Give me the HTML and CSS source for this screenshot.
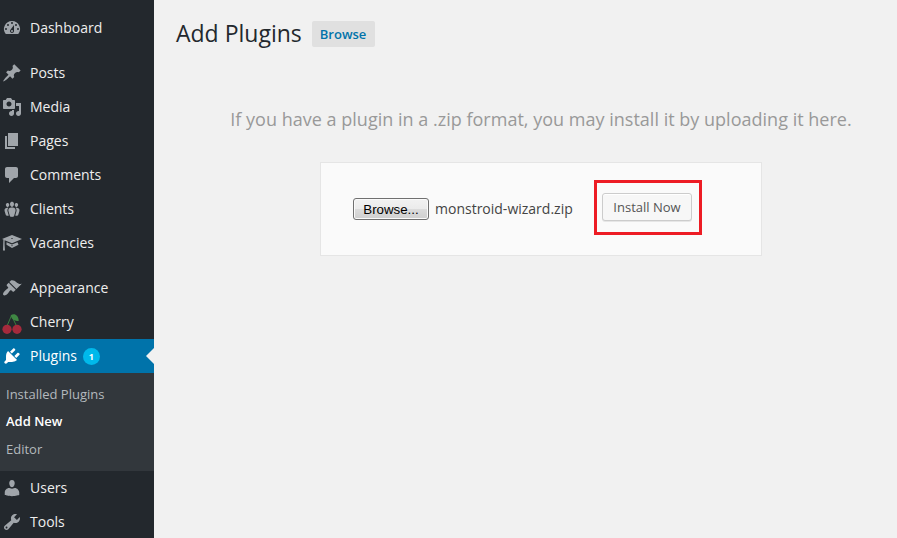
FILE: index.html
```html
<!DOCTYPE html>
<html lang="en">
<head>
<meta charset="utf-8">
<title>Add Plugins</title>
<link rel="stylesheet" href="styles.css">
</head>
<body>
<div class="layout">
<nav class="sidebar">
  <a class="item"><svg class="icon" viewBox="0 0 20 20"><path d="M3.76 16h12.48A7.998 7.998 0 0 0 10 3a7.998 7.998 0 0 0-6.24 13zM10 4a1 1 0 1 1 0 2 1 1 0 0 1 0-2zM6 6a1 1 0 1 1 0 2 1 1 0 0 1 0-2zm8 0a1 1 0 1 1 0 2 1 1 0 0 1 0-2zm-5.37 5.55L12 7v6c0 1.1-.9 2-2 2s-2-.9-2-2c0-.57.24-1.08.63-1.45zM4 10a1 1 0 1 1 0 2 1 1 0 0 1 0-2zm12 0a1 1 0 1 1 0 2 1 1 0 0 1 0-2zm-5 3a1 1 0 1 0-2 0 1 1 0 0 0 2 0z"/></svg><span>Dashboard</span></a>
  <a class="item spaced"><svg class="icon" viewBox="0 0 20 20"><path d="M10.44 3.02l1.82-1.82 6.36 6.35-1.83 1.82c-1.05-.68-2.48-.57-3.41.36l-.75.75c-.92.93-1.04 2.35-.35 3.41l-1.83 1.82-2.41-2.41-2.8 2.79c-.42.42-3.38 2.71-3.8 2.29s1.86-3.39 2.28-3.81l2.79-2.79L4.1 9.36l1.83-1.82c1.05.69 2.48.57 3.4-.36l.75-.75c.93-.92 1.05-2.35.36-3.41z"/></svg><span>Posts</span></a>
  <a class="item"><svg class="icon" viewBox="0 0 20 20"><path d="M13 11V4c0-.55-.45-1-1-1h-1.67L9 1H5L3.67 3H2c-.55 0-1 .45-1 1v7c0 .55.45 1 1 1h10c.55 0 1-.45 1-1zM7 4.5c1.38 0 2.5 1.12 2.5 2.5S8.38 9.5 7 9.5 4.5 8.38 4.5 7 5.62 4.5 7 4.5zM14 6h5v10.5c0 1.38-1.12 2.5-2.5 2.5S14 17.88 14 16.5s1.12-2.5 2.5-2.5c.17 0 .34.02.5.05V9h-3V6zm-4 8.05V13h2v3.5c0 1.38-1.12 2.5-2.5 2.5S7 17.88 7 16.5 8.12 14 9.5 14c.17 0 .34.02.5.05z"/></svg><span>Media</span></a>
  <a class="item"><svg class="icon" viewBox="0 0 20 20"><path d="M6 15V2h10v13H6zm-1 1h8v2H3V5h2v11z"/></svg><span>Pages</span></a>
  <a class="item"><svg class="icon" viewBox="0 0 20 20"><path d="M5 2h9c1.1 0 2 .9 2 2v7c0 1.1-.9 2-2 2h-2l-5 5v-5H5c-1.1 0-2-.9-2-2V4c0-1.1.9-2 2-2z"/></svg><span>Comments</span></a>
  <a class="item"><svg class="icon" viewBox="0 0 20 20"><path d="M8.03 4.46c-.29 1.28.55 3.46 1.97 3.46 1.41 0 2.25-2.18 1.96-3.46-.22-.98-1.08-1.63-1.96-1.63-.89 0-1.74.65-1.97 1.63zm-4.13.9c-.25 1.08.47 2.93 1.67 2.93s1.92-1.85 1.67-2.93c-.19-.83-.92-1.39-1.67-1.39s-1.48.56-1.67 1.39zm8.86 0c-.25 1.08.47 2.93 1.66 2.93 1.2 0 1.92-1.85 1.67-2.93-.19-.83-.92-1.39-1.67-1.39-.74 0-1.47.56-1.66 1.39zm-.59 11.43l1.25-4.3C14.2 10 12.71 8.47 10 8.47c-2.72 0-4.21 1.53-3.44 4.02l1.26 4.3C8.05 17.51 9 18 10 18c.98 0 1.94-.49 2.17-1.21zm-6.1-7.63c-.49.67-.96 1.83-.42 3.59l1.12 3.79c-.34.2-.77.31-1.2.31-.85 0-1.65-.41-1.85-1.03l-1.07-3.65c-.65-2.11.61-3.4 2.92-3.4.27 0 .54.02.79.06-.1.1-.2.22-.29.33zm8.35-.39c2.31 0 3.58 1.29 2.92 3.4l-1.07 3.65c-.2.62-1 1.03-1.85 1.03-.43 0-.86-.11-1.2-.31l1.11-3.77c.55-1.78.08-2.94-.42-3.61-.08-.11-.18-.23-.28-.33.25-.04.51-.06.79-.06z"/></svg><span>Clients</span></a>
  <a class="item"><svg class="icon" viewBox="0 0 20 20"><path d="M10 10.200L2.600 7.200V12L3 17.500H1L1.400 6.600 0 6l10-4 10 4zm0-5.200c-.55 0-1 .22-1 .5s.45.5 1 .5 1-.22 1-.5-.45-.5-1-.5zM4.500 9.200L10 11.400l5.500-2.200 1 2.600L10 15l-5.500-3.200zM10 12.200l-1 .5 1 .6 1-.6z"/></svg><span>Vacancies</span></a>
  <a class="item spaced"><svg class="icon" viewBox="0 0 20 20"><path d="M14.48 11.06L7.41 3.99l1.5-1.5c.5-.56 2.3-.47 3.51.32 1.21.8 1.43 1.28 2.91 2.1 1.18.64 2.45 1.26 4.45.85zm-.71.71L6.7 4.7 4.93 6.47c-.39.39-.39 1.02 0 1.41l1.06 1.06c.39.39.39 1.03 0 1.42-.6.6-1.43 1.11-2.21 1.69-.35.26-.7.53-1.01.84C1.43 14.23.4 16.08 1.4 17.07c.99 1 2.84-.03 4.18-1.36.31-.31.58-.66.85-1.02.57-.78 1.08-1.61 1.69-2.21.39-.39 1.02-.39 1.41 0l1.06 1.06c.39.39 1.02.39 1.41 0z"/></svg><span>Appearance</span></a>
  <a class="item"><svg class="icon" viewBox="0 0 20 20"><path class="stem" d="M9.500 3.500L5 14M9.500 3.500L14.500 14"/><path class="leaf" d="M8.700 3.200C12 1 16.500 2.500 16.700 9 12.500 9 9.500 7.500 8.700 3.200z"/><circle class="fruit" cx="5" cy="17.300" r="4.600"/><circle class="fruit" cx="15" cy="17.300" r="4.600"/></svg><span>Cherry</span></a>
  <a class="item current"><svg class="icon" viewBox="0 0 20 20"><path d="M13.110 4.360L9.870 7.600 8 5.730l3.240-3.240c.35-.34 1.050-.2 1.560.32.52.51.66 1.210.31 1.550zm-8 1.770l.91-1.120 9.010 9.010-1.190.84c-.71.71-2.630 1.160-3.820 1.160H6.140L4.900 17.260c-.59.59-1.540.59-2.120 0-.59-.58-.59-1.530 0-2.120l1.240-1.240v-3.880c0-1.130.4-3.190 1.090-3.890zm7.260 3.970l3.240-3.240c.34-.35 1.040-.21 1.550.31.52.51.66 1.210.31 1.550l-3.240 3.250z"/></svg><span>Plugins</span><span class="count">1</span></a>
  <div class="submenu"><a>Installed Plugins</a><a class="selected">Add New</a><a>Editor</a></div>
  <a class="item"><svg class="icon" viewBox="0 0 20 20"><path d="M10 9.250c-2.270 0-2.730-3.440-2.730-3.440C7 4.020 7.820 2 9.970 2c2.160 0 2.980 2.020 2.710 3.810 0 0-.41 3.440-2.680 3.440zm0 1.450L12.720 10c2.390 0 4.520 2.330 4.520 4.530v2.490s-3.650 1.130-7.240 1.130c-3.650 0-7.240-1.130-7.240-1.130v-2.490c0-2.250 1.940-4.480 4.470-4.480z"/></svg><span>Users</span></a>
  <a class="item"><svg class="icon" viewBox="0 0 20 20"><path d="M16.680 9.770c-1.340 1.340-3.300 1.670-4.950.99l-5.410 6.520c-.99.99-2.590.99-3.580 0s-.99-2.590 0-3.570l6.520-5.420c-.68-1.650-.35-3.610.99-4.950 1.280-1.280 3.120-1.620 4.720-1.060l-2.890 2.890 2.820 2.820 2.860-2.870c.53 1.580.18 3.390-1.080 4.650zM3.810 16.210c.4.390 1.040.390 1.430 0 .4-.4.4-1.040 0-1.430-.39-.4-1.030-.4-1.430 0-.39.390-.39 1.030 0 1.430z"/></svg><span>Tools</span></a>
</nav>
<main class="content">
  <header class="heading"><h1>Add Plugins</h1><a class="browse-link">Browse</a></header>
  <p class="help">If you have a plugin in a .zip format, you may install it by uploading it here.</p>
  <form class="upload">
    <button type="button" class="file-button">Browse...</button>
    <span class="file-name">monstroid-wizard.zip</span>
    <div class="highlight"><button type="button" class="install">Install Now</button></div>
  </form>
</main>
</div>
</body>
</html>
```
FILE: styles.css
```css
* { box-sizing: border-box; }
body {
  margin: 0;
  height: 538px;
  overflow: hidden;
  background: #f1f1f1;
  font-family: "Open Sans", sans-serif;
}
.layout { display: flex; height: 538px; }
.sidebar {
  width: 154px;
  flex: none;
  height: 538px;
  overflow: hidden;
  padding-top: 11px;
  background: #23282d;
}
.item {
  display: flex;
  align-items: center;
  height: 34px;
  padding-left: 2px;
  color: #eee;
  font-size: 14px;
  line-height: 18px;
}
.spaced { margin-top: 11px; }
.icon {
  width: 20px;
  height: 20px;
  flex: none;
  margin-right: 8px;
  fill: #a0a5aa;
  overflow: visible;
}
.stem { fill: none; stroke: #37803f; stroke-width: 1; }
.leaf { fill: #3f8743; }
.fruit { fill: #a52a3c; }
.current { background: #0073aa; color: #fff; }
.current .icon { fill: #fff; }
.current::after {
  content: "";
  margin-left: auto;
  border: 8px solid transparent;
  border-left: 0;
  border-right-color: #f1f1f1;
}
.count {
  width: 17px;
  height: 17px;
  margin-left: 6px;
  border-radius: 50%;
  background: #00b9eb;
  font-size: 9px;
  font-weight: 700;
  line-height: 17px;
  text-align: center;
}
.submenu {
  display: flex;
  flex-direction: column;
  height: 98px;
  padding: 8px 6px;
  background: #32373c;
  color: #b4b9be;
  font-size: 13px;
  line-height: 27.400px;
}
.submenu .selected { color: #fff; font-weight: 600; }
.content {
  flex: 1;
  display: flex;
  flex-direction: column;
  align-items: center;
  padding-left: 31px;
}
.heading {
  align-self: flex-start;
  display: flex;
  align-items: center;
  gap: 10px;
  height: 26px;
  margin: 21px 0 0 -9px;
}
h1 {
  margin: -2px 0 0;
  color: #23282d;
  font-size: 23px;
  font-weight: 400;
  line-height: 26px;
}
.browse-link {
  width: 63px;
  height: 26px;
  padding: 0 8px;
  border-radius: 2px;
  background: #e0e0e0;
  color: #0073aa;
  font-size: 13px;
  font-weight: 600;
  line-height: 26px;
}
.help {
  margin: 58px 0 0 0;
  color: #999;
  font-size: 18px;
  line-height: 28px;
  letter-spacing: .012px;
  white-space: nowrap;
}
.upload {
  display: flex;
  align-items: center;
  width: 442px;
  height: 94px;
  margin-top: 29px;
  padding-left: 32px;
  border: 1px solid #e5e5e5;
  background: #fafafa;
}
.file-button {
  width: 76px;
  height: 22px;
  padding: 0;
  border: 1px solid #707070;
  border-radius: 3px;
  background: linear-gradient(#f2f2f2, #ebebeb 50%, #dcdcdc 50%, #cfcfcf);
  box-shadow: inset 0 0 0 1px #fafafa;
  color: #000;
  font: 13.300px "Liberation Sans", sans-serif;
}
.file-name {
  width: 165px;
  padding-left: 6px;
  color: #444;
  font-size: 14px;
  line-height: 20px;
  white-space: nowrap;
}
.highlight {
  display: flex;
  width: 108px;
  height: 55px;
  margin-top: -3px;
  padding: 10px 5px;
  border: 3px solid #ed1c24;
}
.install {
  width: 90px;
  height: 28px;
  padding: 0;
  border: 1px solid #ccc;
  border-radius: 3px;
  background: #f7f7f7;
  box-shadow: inset 0 1px 0 #fff, 0 1px 0 rgba(0, 0, 0, .08);
  color: #555;
  font: 13px "Open Sans", sans-serif;
}
```
